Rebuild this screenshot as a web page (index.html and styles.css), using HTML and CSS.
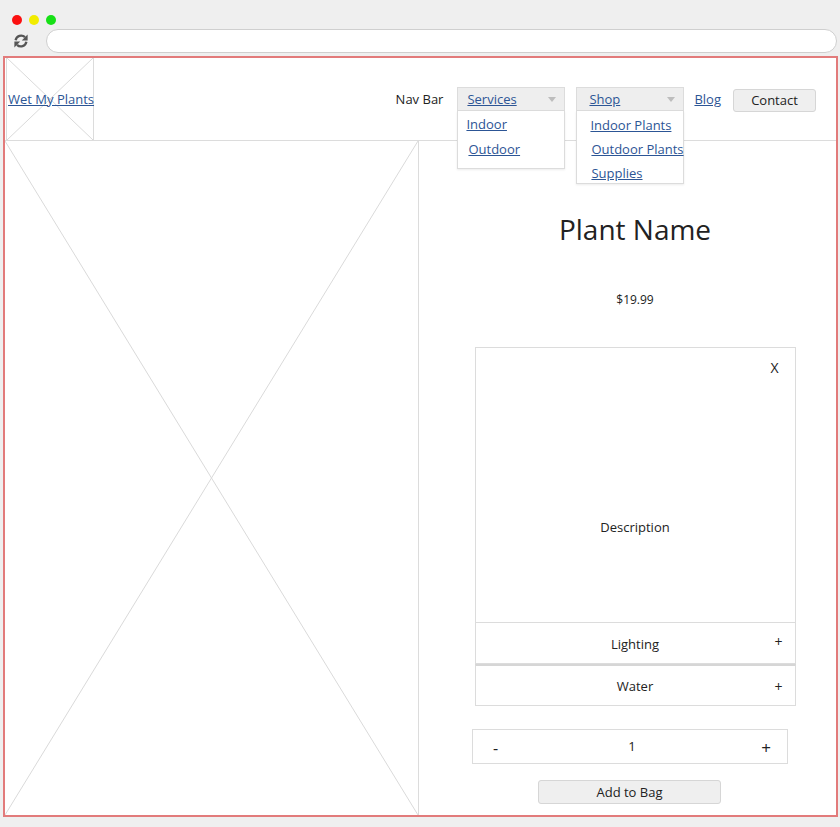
FILE: index.html
```html
<!DOCTYPE html>
<html lang="en">
<head>
<meta charset="utf-8">
<title>Wet My Plants</title>
<link rel="stylesheet" href="styles.css">
</head>
<body>
<div class="chrome">
  <div class="dots">
    <span class="dot red"></span><span class="dot yellow"></span><span class="dot green"></span>
  </div>
  <div class="toolbar">
    <svg class="reload" viewBox="0 0 16 16" width="16" height="16">
      <path d="M2.6 7.2 A5.6 5.6 0 0 1 12 4.2" fill="none" stroke="#555" stroke-width="2.3"/>
      <polygon points="14.6,1.6 14.6,7.4 8.8,7.4" fill="#555"/>
      <path d="M13.4 8.8 A5.6 5.6 0 0 1 4 11.8" fill="none" stroke="#555" stroke-width="2.3"/>
      <polygon points="1.4,14.4 1.4,8.6 7.2,8.6" fill="#555"/>
    </svg>
    <div class="address"></div>
  </div>
</div>
<div class="frame">
  <header class="header">
    <div class="logo">
      <svg class="ph" viewBox="0 0 100 100" preserveAspectRatio="none"><line x1="0" y1="0" x2="100" y2="100"/><line x1="100" y1="0" x2="0" y2="100"/></svg>
      <a href="#" class="logo-link">Wet My Plants</a>
    </div>
    <nav class="nav">
      <span class="nav-label">Nav Bar</span>
      <div class="dropdown services">
        <div class="toggle"><a href="#">Services</a><span class="caret"></span></div>
        <div class="menu">
          <a href="#" class="item i1">Indoor</a>
          <a href="#" class="item i2">Outdoor</a>
        </div>
      </div>
      <div class="dropdown shop">
        <div class="toggle"><a href="#">Shop</a><span class="caret"></span></div>
        <div class="menu">
          <a href="#" class="item">Indoor Plants</a>
          <a href="#" class="item i2">Outdoor Plants</a>
          <a href="#" class="item i2">Supplies</a>
        </div>
      </div>
      <a href="#" class="blog">Blog</a>
      <button class="btn contact">Contact</button>
    </nav>
  </header>
  <main class="main">
    <div class="image">
      <svg class="ph" viewBox="0 0 100 100" preserveAspectRatio="none"><line x1="0" y1="0" x2="100" y2="100"/><line x1="100" y1="0" x2="0" y2="100"/></svg>
    </div>
    <section class="detail">
      <h1 class="title">Plant Name</h1>
      <div class="price">$19.99</div>
      <div class="accordion">
        <div class="panel">
          <div class="close">X</div>
          <div class="desc">Description</div>
        </div>
        <div class="row"><span></span><span class="label">Lighting</span><span class="plus">+</span></div>
        <div class="row water"><span></span><span class="label">Water</span><span class="plus">+</span></div>
      </div>
      <div class="qty">
        <span class="minus">-</span>
        <span class="count">1</span>
        <span class="qplus">+</span>
      </div>
      <button class="btn add">Add to Bag</button>
    </section>
  </main>
</div>
</body>
</html>
```
FILE: styles.css
```css
* { box-sizing: border-box; }
html, body { margin: 0; padding: 0; }
body {
  background: #efefef;
  font-family: "Open Sans", "Noto Sans", sans-serif;
  font-size: 13px;
  color: #222;
  width: 840px;
  height: 827px;
  overflow: hidden;
}
a { color: #2c5595; text-decoration: underline; }

.chrome { padding: 15px 0 0 12px; }
.dots { display: flex; gap: 7px; height: 10px; }
.dot { width: 10px; height: 10px; border-radius: 50%; display: block; }
.red { background: #fb1010; }
.yellow { background: #f2ec00; }
.green { background: #16e016; }
.toolbar { display: flex; align-items: center; margin-top: 4px; height: 24px; }
.reload { margin-left: 1px; display: block; }
.address {
  margin-left: 17px;
  width: 791px;
  height: 24px;
  background: #fff;
  border: 1px solid #cfcfcf;
  border-radius: 12px;
}

.frame {
  margin: 3px 0 0 3px;
  width: 835px;
  height: 761px;
  border: 2px solid #e27b7b;
  background: #fff;
  display: flex;
  flex-direction: column;
}

.ph { position: absolute; inset: 0; width: 100%; height: 100%; }
.ph line { stroke: #dadada; stroke-width: 1; vector-effect: non-scaling-stroke; }

.header {
  height: 83px;
  border-bottom: 1px solid #dcdcdc;
  display: flex;
  align-items: center;
  flex: none;
}
.logo {
  position: relative;
  width: 88px;
  height: 83px;
  border: 1px solid #dcdcdc;
  border-top: none;
  display: flex;
  align-items: center;
  margin-left: 1px;
}
.logo-link { position: relative; margin-left: 1px; white-space: nowrap; line-height: 18px; }

.nav {
  margin-left: auto;
  margin-right: 20px;
  display: flex;
  align-items: center;
}
.nav-label { margin-right: 14px; }
.dropdown { position: relative; }
.toggle {
  height: 24px;
  background: #eeeeee;
  border: 1px solid #dcdcdc;
  display: flex;
  align-items: center;
  justify-content: space-between;
  padding: 0 8px 0 9px;
}
.services .toggle { width: 108px; }
.shop { margin-left: 11px; }
.shop .toggle { width: 108px; padding-left: 12px; }
.caret {
  width: 0; height: 0;
  border-left: 4px solid transparent;
  border-right: 4px solid transparent;
  border-top: 5px solid #bdbdbd;
}
.menu {
  position: absolute;
  top: 24px;
  left: 0;
  right: 0;
  background: #fff;
  border: 1px solid #dcdcdc;
  border-top: none;
  box-shadow: 0 1px 2px rgba(0,0,0,0.08);
  display: flex;
  flex-direction: column;
  align-items: flex-start;
  padding: 1px 0 0;
}
.services .menu { height: 58px; }
.services .i2 { margin-top: 1px; }
.shop .menu { height: 73px; padding-top: 2px; }
.item { line-height: 24px; padding-left: 8px; white-space: nowrap; }
.services .i2 { padding-left: 10px; }
.shop .item { padding-left: 13px; }
.shop .i2 { padding-left: 14px; }
.blog { margin-left: 10px; }
.btn {
  font-family: inherit;
  font-size: 13px;
  color: #222;
  background: #efefef;
  border: 1px solid #d6d6d6;
  border-radius: 3px;
  padding: 0;
}
.contact { margin-left: 12px; width: 83px; height: 23px; margin-top: 2px; }

.main { display: flex; flex: 1; }
.image {
  position: relative;
  width: 414px;
  border-right: 1px solid #dcdcdc;
  flex: none;
}
.detail {
  flex: 1;
  padding-left: 15px;
  display: flex;
  flex-direction: column;
  align-items: center;
}
.title {
  margin: 69px 0 0;
  font-size: 28px;
  font-weight: 400;
  line-height: 38px;
}
.price { margin-top: 43px; font-size: 12px; line-height: 17px; }
.accordion { margin-top: 39px; width: 321px; }
.panel {
  height: 275px;
  border: 1px solid #dcdcdc;
  border-bottom: none;
  padding: 11px 16px 0;
  display: flex;
  flex-direction: column;
}
.close { align-self: flex-end; font-size: 14px; line-height: 18px; }
.desc { text-align: center; margin-top: 141px; line-height: 18px; }
.row {
  height: 42px;
  border: 1px solid #dcdcdc;
  display: grid;
  grid-template-columns: 1fr auto 1fr;
  align-items: center;
  padding: 0 12px;
}
.row .label { padding-top: 2px; }
.row .plus { justify-self: end; font-size: 14px; margin-top: -4px; }
.water { border-top: 2px solid #d6d6d6; height: 42px; }
.water .label { padding-top: 0; }
.water .plus { margin-top: 1px; }
.qty {
  margin-top: 23px;
  align-self: flex-start;
  margin-left: 38px;
  width: 316px;
  height: 35px;
  border: 1px solid #dcdcdc;
  display: grid;
  grid-template-columns: 1fr auto 1fr;
  align-items: center;
  padding: 0 16px 0 20px;
}
.minus { font-size: 16px; padding-top: 2px; }
.count { margin-top: -2px; }
.qplus { justify-self: end; font-size: 17px; padding-top: 2px; }
.add {
  margin-top: 16px;
  margin-right: 11px;
  width: 183px;
  height: 24px;
}
```
